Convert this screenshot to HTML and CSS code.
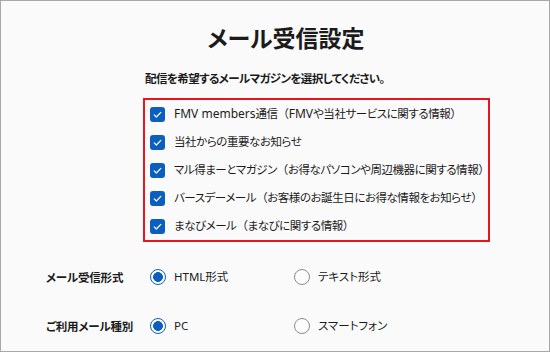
FILE: index.html
```html
<!DOCTYPE html>
<html lang="ja">
<head>
<meta charset="utf-8">
<link rel="stylesheet" href="styles.css">
</head>
<body>
<div class="frame">
  <h1 class="title">メール受信設定</h1>
  <p class="lead">配信を希望するメールマガジンを選択してください。</p>
  <div class="box">
    <div class="item"><span class="cb"><svg viewBox="0 0 15 15"><path d="M4.2 7.8 L6.4 10 L10.8 5.4" fill="none" stroke="#fff" stroke-width="1.2" stroke-linecap="round" stroke-linejoin="round"/></svg></span><span class="txt"><span class="lat">FMV members</span>通信<span class="paren">（</span><span class="lat">FMV</span>や当社サービスに関する情報<span class="paren">）</span></span></div>
    <div class="item"><span class="cb"><svg viewBox="0 0 15 15"><path d="M4.2 7.8 L6.4 10 L10.8 5.4" fill="none" stroke="#fff" stroke-width="1.2" stroke-linecap="round" stroke-linejoin="round"/></svg></span><span class="txt">当社からの重要なお知らせ</span></div>
    <div class="item"><span class="cb"><svg viewBox="0 0 15 15"><path d="M4.2 7.8 L6.4 10 L10.8 5.4" fill="none" stroke="#fff" stroke-width="1.2" stroke-linecap="round" stroke-linejoin="round"/></svg></span><span class="txt">マル得まーとマガジン<span class="paren">（</span>お得なパソコンや周辺機器に関する情報<span class="paren">）</span></span></div>
    <div class="item"><span class="cb"><svg viewBox="0 0 15 15"><path d="M4.2 7.8 L6.4 10 L10.8 5.4" fill="none" stroke="#fff" stroke-width="1.2" stroke-linecap="round" stroke-linejoin="round"/></svg></span><span class="txt">バースデーメール<span class="paren">（</span>お客様のお誕生日にお得な情報をお知らせ<span class="paren">）</span></span></div>
    <div class="item"><span class="cb"><svg viewBox="0 0 15 15"><path d="M4.2 7.8 L6.4 10 L10.8 5.4" fill="none" stroke="#fff" stroke-width="1.2" stroke-linecap="round" stroke-linejoin="round"/></svg></span><span class="txt">まなびメール<span class="paren">（</span>まなびに関する情報<span class="paren">）</span></span></div>
  </div>
  <div class="settings">
    <div class="row">
      <span class="label">メール受信形式</span>
      <span class="opt"><span class="radio on"></span><span class="txt">HTML形式</span></span>
      <span class="opt"><span class="radio"></span><span class="txt">テキスト形式</span></span>
    </div>
    <div class="row">
      <span class="label">ご利用メール種別</span>
      <span class="opt"><span class="radio on"></span><span class="txt">PC</span></span>
      <span class="opt"><span class="radio"></span><span class="txt">スマートフォン</span></span>
    </div>
  </div>
</div>
</body>
</html>
```
FILE: styles.css
```css
html, body {
  margin: 0;
  padding: 0;
}
body {
  font-family: "Noto Sans", "Noto Sans CJK JP", sans-serif;
  font-feature-settings: "palt";
  color: #1b1b1b;
  background: #fafafa;
}
.frame {
  width: 550px;
  height: 352px;
  box-sizing: border-box;
  border: 1px solid #a8a8a8;
  background: #fafafa;
  padding-top: 23px;
  overflow: hidden;
}
.title {
  margin: 0;
  font-size: 23px;
  line-height: 28px;
  font-weight: 700;
  text-align: center;
  padding-left: 22px;
}
.lead {
  margin: 19px 0 0 144px;
  font-size: 11.5px;
  line-height: 16px;
  font-weight: 700;
  letter-spacing: -0.6px;
}
.box {
  margin: 11px 0 0 142px;
  width: 347px;
  box-sizing: border-box;
  border: 2px solid #e8141e;
}
.item {
  height: 28px;
  display: flex;
  align-items: center;
  padding-left: 5px;
}
.cb {
  width: 15px;
  height: 15px;
  border-radius: 3px;
  background: #0a5fc0;
  display: flex;
  flex: none;
}
.cb svg {
  width: 15px;
  height: 15px;
}
.txt {
  font-size: 11.5px;
  line-height: 16px;
  margin-left: 9px;
  white-space: nowrap;
}
.item .txt {
  letter-spacing: -0.45px;
}
.lat {
  letter-spacing: 0;
  font-size: 12px;
}
.paren {
  font-feature-settings: normal;
}
.settings {
  margin-top: 21px;
  padding-left: 45px;
  display: flex;
  flex-direction: column;
  gap: 21px;
}
.row {
  height: 28px;
  display: flex;
  align-items: center;
}
.label {
  width: 104px;
  font-size: 11.5px;
  font-weight: 700;
  white-space: nowrap;
  letter-spacing: -0.2px;
}
.opt {
  width: 144px;
  display: flex;
  align-items: center;
}
.opt .txt {
  margin-left: 8px;
}
.radio {
  width: 16px;
  height: 16px;
  box-sizing: border-box;
  border-radius: 50%;
  border: 1px solid #8c8c8c;
  background: #fdfdfd;
  flex: none;
}
.radio.on {
  border: 1px solid #0a5fc0;
  background: radial-gradient(circle, #0a5fc0 0 4.6px, #ffffff 5.2px);
}
```
